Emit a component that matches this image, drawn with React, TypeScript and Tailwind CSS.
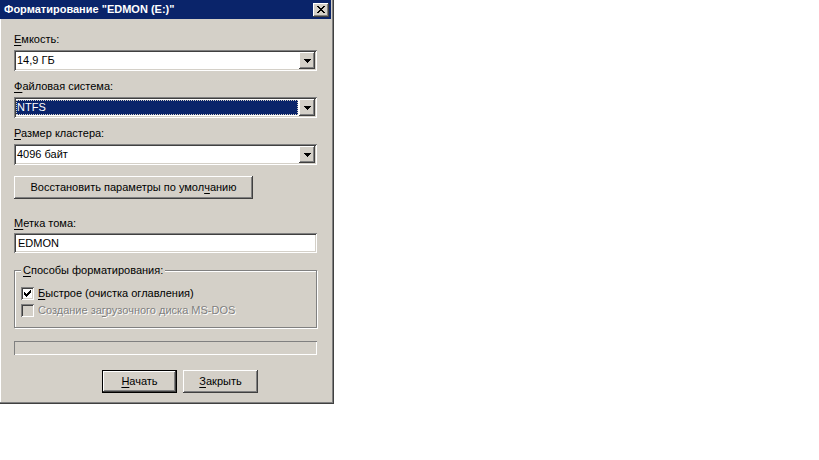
import React from "react";

const face = "bg-[#d4d0c8]";
const sunken =
  "shadow-[inset_1px_1px_0_#808080,inset_-1px_-1px_0_#ffffff,inset_2px_2px_0_#404040,inset_-2px_-2px_0_#d4d0c8]";
const raised =
  "shadow-[inset_-1px_-1px_0_#404040,inset_1px_1px_0_#ffffff,inset_-2px_-2px_0_#808080,inset_2px_2px_0_#d4d0c8]";

// pixel bitmaps, one string per row
function Bitmap({ rows, color = "#000" }: { rows: string[]; color?: string }) {
  const w = rows[0].length;
  const h = rows.length;
  return (
    <svg width={w} height={h} viewBox={`0 0 ${w} ${h}`} shapeRendering="crispEdges">
      {rows.map((r, y) =>
        r.split("").map((c, x) =>
          c === "#" ? <rect key={`${x}-${y}`} x={x} y={y} width={1} height={1} fill={color} /> : null
        )
      )}
    </svg>
  );
}

const arrowRows = ["#######", ".#####.", "..###..", "...#..."];
const closeRows = [
  "##....##",
  ".##..##.",
  "..####..",
  "...##...",
  "..####..",
  ".##..##.",
  "##....##",
];
const checkRows = [
  "......#",
  ".....##",
  "#...###",
  "##.###.",
  "#####..",
  ".###...",
  "..#....",
];

function U({ children }: { children: React.ReactNode }) {
  return <span className="underline underline-offset-[2px]">{children}</span>;
}

function Combo({ value, selected }: { value: string; selected?: boolean }) {
  return (
    <div className={`flex h-[21px] w-[303px] bg-white p-[2px] ${sunken}`}>
      <div className="flex flex-1 items-stretch py-[1px] pl-0 pr-[1px]">
        {selected ? (
          <div className="flex flex-1 items-center bg-[#0a246a] pl-[1px] text-white outline-1 outline-dotted outline-[#d4d0c8] -outline-offset-1">
            {value}
          </div>
        ) : (
          <div className="flex flex-1 items-center pl-[1px]">{value}</div>
        )}
      </div>
      <div className={`flex h-[17px] w-[16px] items-center justify-center ${face} ${raised}`}>
        <Bitmap rows={arrowRows} />
      </div>
    </div>
  );
}

function Check({ checked, disabled }: { checked?: boolean; disabled?: boolean }) {
  return (
    <div
      className={`flex h-[13px] w-[13px] items-center justify-center ${
        disabled ? face : "bg-white"
      } ${sunken}`}
    >
      {checked && <Bitmap rows={checkRows} />}
    </div>
  );
}

export default function App() {
  return (
    <div className="min-h-screen bg-white font-['Tahoma','Liberation_Sans',sans-serif] text-[11px] leading-[13px] text-black">
      <div
        className={`flex h-[404px] w-[334px] flex-col ${face} shadow-[inset_-1px_-1px_0_#404040,inset_-2px_-2px_0_#808080,inset_1px_0_0_#ffffff]`}
      >
        {/* title bar */}
        <div className="mr-[3px] flex h-[19px] items-center bg-[#0a246a] pl-[4px] pr-[2px]">
          <span className="flex-1 font-bold text-white">Форматирование "EDMON (E:)"</span>
          <div className={`flex h-[14px] w-[16px] items-center justify-center ${face} ${raised}`}>
            <Bitmap rows={closeRows} />
          </div>
        </div>

        <div className="flex flex-col px-[14px] pt-[14px]">
          <div className="h-[13px]">
            <U>Е</U>мкость:
          </div>
          <div className="mt-[4px]">
            <Combo value="14,9 ГБ" />
          </div>

          <div className="mt-[9px] h-[13px]">
            <U>Ф</U>айловая система:
          </div>
          <div className="mt-[4px]">
            <Combo value="NTFS" selected />
          </div>

          <div className="mt-[9px] h-[13px]">
            <U>Р</U>азмер кластера:
          </div>
          <div className="mt-[4px]">
            <Combo value="4096 байт" />
          </div>

          <div
            className={`mt-[11px] flex h-[23px] w-[239px] items-center justify-center ${raised}`}
          >
            Восстановить параметры по умол<U>ч</U>анию
          </div>

          <div className="mt-[18px] h-[13px]">
            <U>М</U>етка тома:
          </div>
          <div className={`mt-[3px] flex h-[20px] w-[303px] items-center bg-white pl-[4px] ${sunken}`}>
            EDMON
          </div>

          {/* format options group */}
          <div className="relative mt-[17px] flex h-[58px] w-[303px] flex-col gap-[4px] border border-[#808080] pl-[6px] pt-[16px] shadow-[inset_1px_1px_0_#ffffff,1px_1px_0_#ffffff]">
            <span className={`absolute -top-[7px] left-[6px] px-[2px] ${face}`}>
              <U>С</U>пособы форматирования:
            </span>
            <div className="flex h-[13px] items-center gap-[4px]">
              <Check checked />
              <span>
                <U>Б</U>ыстрое (очистка оглавления)
              </span>
            </div>
            <div className="flex h-[13px] items-center gap-[4px]">
              <Check disabled />
              <span className="text-[#808080] [text-shadow:1px_1px_0_#ffffff]">
                Создание за<U>г</U>рузочного диска MS-DOS
              </span>
            </div>
          </div>

          {/* progress bar */}
          <div className="mt-[13px] h-[14px] w-[303px] shadow-[inset_1px_1px_0_#808080,inset_-1px_-1px_0_#ffffff]" />

          <div className="mt-[15px] flex gap-[6px] pl-[88px]">
            <div className="h-[23px] w-[75px] border border-black">
              <div className={`flex h-full w-full items-center justify-center ${raised}`}>
                <U>Н</U>ачать
              </div>
            </div>
            <div className={`flex h-[23px] w-[75px] items-center justify-center ${raised}`}>
              <U>З</U>акрыть
            </div>
          </div>
        </div>
      </div>
    </div>
  );
}
